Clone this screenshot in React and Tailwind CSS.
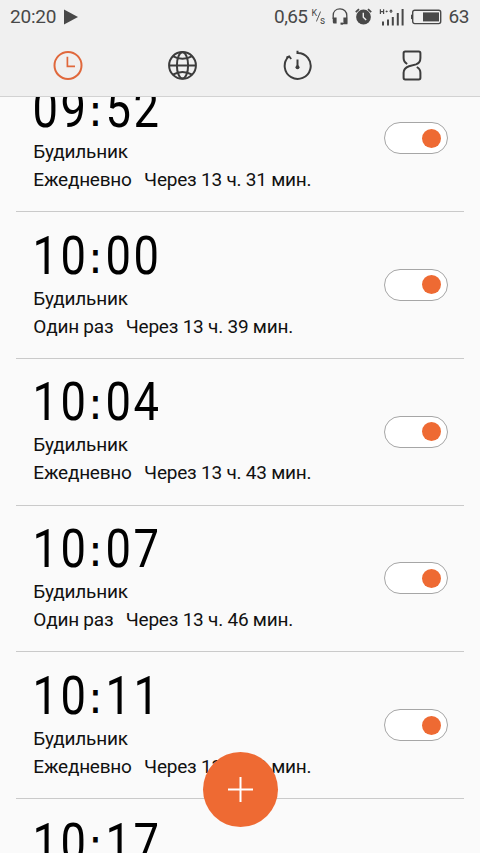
import React, { useState } from 'react';

const initialAlarms = [
    { id: 1, time: '09:52', repeat: 'Ежедневно', left: 'Через 13 ч. 31 мин.' },
    { id: 2, time: '10:00', repeat: 'Один раз', left: 'Через 13 ч. 39 мин.' },
    { id: 3, time: '10:04', repeat: 'Ежедневно', left: 'Через 13 ч. 43 мин.' },
    { id: 4, time: '10:07', repeat: 'Один раз', left: 'Через 13 ч. 46 мин.' },
    { id: 5, time: '10:11', repeat: 'Ежедневно', left: 'Через 13 ч. 50 мин.' },
    { id: 6, time: '10:17', repeat: 'Ежедневно', left: 'Через 13 ч. 56 мин.' },
];

const StatusBar = () => (
    <div className="h-[33px] flex items-center justify-between pl-[10px] pr-[11px] text-[19px] leading-[33px] text-[#484848]">
        <div className="flex items-center gap-[8px]">
            <span className="tracking-[-0.2px]">20:20</span>
            <svg width="14" height="16" viewBox="0 0 14 16" fill="#484848">
                <path d="M0 0.5L14 8L0 15.5Z" />
            </svg>
        </div>
        <div className="flex items-center">
            <span className="tracking-[-0.6px]">0,65</span>
            {/* Speed unit */}
            <span className="flex w-[14px] h-[16px] ml-[4px] text-[9px] leading-[8px]">
                <span>K</span>
                <svg className="-ml-[1px] mt-[2px] shrink-0" width="5" height="11" viewBox="0 0 5 11" stroke="#484848" strokeWidth="0.9">
                    <path d="M4.6 0.5L0.4 10.5" />
                </svg>
                <span className="self-end -ml-[1px] text-[10px]">s</span>
            </span>
            {/* Headset */}
            <svg className="ml-[7px]" width="16" height="17" viewBox="0 0 16 17" fill="none" stroke="#484848" strokeWidth="1.3">
                <path d="M1.2 11V7.5C1.2 3.6 4 0.9 8 0.9S14.8 3.6 14.8 7.5V15.6H9" />
                <path d="M0.8 9.5H4.6V15.5H2Q0.8 15.5 0.8 14ZM15.2 9.5H11.4V15.5H15.2Z" fill="#484848" stroke="none" />
                <path d="M8.5 15.6H11" strokeWidth="2" />
            </svg>
            {/* Alarm */}
            <svg className="ml-[7px]" width="17" height="17" viewBox="0 0 17 17" fill="none">
                <circle cx="8.5" cy="9" r="7.4" fill="#484848" />
                <path d="M0.8 4.2L4 1.2M16.2 4.2L13 1.2" stroke="#484848" strokeWidth="1.8" />
                <path d="M8.3 4.8V9.2L11.2 12" stroke="#efefef" strokeWidth="1.4" />
            </svg>
            {/* Mobile signal */}
            <svg className="ml-[7px]" width="25" height="18" viewBox="0 0 25 18" fill="#484848">
                <path d="M0.8 1.2H2V3H4V1.2H5.2V6H4V4.2H2V6H0.8Z" />
                <path d="M6.3 3.2L7.7 2.4L9 3.2L7.7 4.6ZM10 3.5L12 1.2L14 3.5H12.6V5H11.4V3.5Z" />
                <path d="M3 13.5H5V17.5H3ZM8 11.5H10V17.5H8ZM12.8 9H14.8V17.5H12.8ZM17.8 5H19.8V17.5H17.8ZM22.6 1H24.6V17.5H22.6Z" />
            </svg>
            {/* Battery */}
            <svg className="ml-[7px]" width="31" height="16" viewBox="0 0 31 16" fill="none">
                <rect x="1.7" y="1.2" width="28" height="13.4" rx="2" stroke="#484848" strokeWidth="1.4" />
                <rect x="0" y="5.7" width="1.6" height="4.4" fill="#484848" />
                <rect x="12" y="3.4" width="16" height="9" fill="#484848" />
            </svg>
            <span className="ml-[6px] tracking-[-0.4px]">63</span>
        </div>
    </div>
);

const Tabs = () => (
    <nav className="h-[63px] grid grid-cols-[136px_94px_136px_94px] pt-[17px] pr-[20px]">
        <button className="flex justify-center h-[32px]">
            <svg width="30" height="31" viewBox="0 0 30 31" fill="none" stroke="#e0683c" strokeWidth="2">
                <circle cx="15" cy="15.4" r="13.5" />
                <path d="M14.4 6.8V16.3H22" strokeWidth="1.7" />
            </svg>
        </button>
        <button className="flex justify-center h-[32px]">
            <svg width="30" height="31" viewBox="0 0 30 31" fill="none" stroke="#3c3c3c" strokeWidth="2">
                <circle cx="14.5" cy="15.4" r="13.4" />
                <ellipse cx="14.5" cy="15.4" rx="5.6" ry="13.2" />
                <path d="M1.4 15.4H28M4.8 6.2Q14.5 11.5 24.2 6.2M4.8 24.6Q14.5 19.3 24.2 24.6" />
            </svg>
        </button>
        <button className="flex justify-center h-[32px]">
            <svg width="30" height="31" viewBox="0 0 30 31" fill="none" stroke="#3c3c3c" strokeWidth="2">
                <path d="M14.5 0.8V4M14.5 2.9A13 13 0 1 1 5.6 6.6" />
                <path d="M3.4 7.6L6.2 6.4L8.2 9" strokeWidth="1.8" />
                <path d="M14.5 9.5V17" />
                <circle cx="14.5" cy="17.3" r="2" fill="#3c3c3c" stroke="none" />
            </svg>
        </button>
        <button className="flex justify-center h-[32px]">
            <svg className="-ml-[2px]" width="20" height="31" viewBox="0 0 20 31" fill="none" stroke="#3c3c3c" strokeWidth="2">
                <path d="M5.2 14Q1.6 11.8 1.6 8V3.2Q1.6 1.6 3.2 1.6H16.8Q18.4 1.6 18.4 3.2V8Q18.4 12.8 14 14.4L7 16.2Q1.6 18.2 1.6 22.8V27.8Q1.6 29.4 3.2 29.4H16.8Q18.4 29.4 18.4 27.8V22.8Q18.4 19 14.8 17" />
            </svg>
        </button>
    </nav>
);

// Narrow digits, one fixed cell per character
const AlarmTime = ({ value }) => (
    <div className="flex h-[54px] text-[54px] leading-[54px] text-black -ml-[2.5px]">
        {value.split('').map((char, i) =>
            char === ':' ? (
                <span key={i} className="w-[17px] flex justify-center font-['DejaVu_Sans',sans-serif] text-[44px] pt-[2px]">
                    :
                </span>
            ) : (
                <span key={i} className="w-[28px] flex justify-center">
                    <span className="scale-x-[0.84]">{char}</span>
                </span>
            )
        )}
    </div>
);

const Toggle = ({ on, onClick }) => (
    <button
        onClick={onClick}
        className={`w-[64px] h-[32px] rounded-full border border-[#a6a6a6] bg-white flex items-center px-[6px] ${on ? 'justify-end' : 'justify-start'}`}
    >
        <span className={`w-[19px] h-[19px] rounded-full ${on ? 'bg-[#ee6a33]' : 'bg-[#bdbdbd]'}`} />
    </button>
);

const App = () => {
    const [alarms, setAlarms] = useState(initialAlarms.map((a) => ({ ...a, on: true })));

    const toggle = (id) => {
        setAlarms(alarms.map((a) => (a.id === id ? { ...a, on: !a.on } : a)));
    };

    return (
        <div className="relative w-[480px] h-[853px] flex flex-col overflow-hidden bg-[#fafafa] font-['Roboto',sans-serif]">
            <header className="h-[97px] shrink-0 bg-[#f0f0f0] border-b border-[#d2d2d2]">
                <StatusBar />
                <Tabs />
            </header>

            <main className="flex-1 min-h-0 overflow-hidden">
                <ul className="-mt-[31.8px] px-[16px]">
                    {alarms.map((alarm) => (
                        <li
                            key={alarm.id}
                            className="h-[146.8px] flex justify-between border-b border-[#cacaca] pl-[17.3px] pr-[16px]"
                        >
                            <div className="pt-[16.6px] text-[19px] leading-[28px] tracking-[-0.22px] text-[#111]">
                                <AlarmTime value={alarm.time} />
                                <p className="mt-[2px]">Будильник</p>
                                <p className="flex gap-[12.4px]">
                                    <span>{alarm.repeat}</span>
                                    <span>{alarm.left}</span>
                                </p>
                            </div>
                            <div className="pt-[56.8px]">
                                <Toggle on={alarm.on} onClick={() => toggle(alarm.id)} />
                            </div>
                        </li>
                    ))}
                </ul>
            </main>

            {/* Add button */}
            <button className="absolute left-[202.5px] top-[752px] w-[75px] h-[75px] rounded-full bg-[#ee6a33] flex items-center justify-center">
                <svg width="25" height="25" viewBox="0 0 25 25" stroke="#fff" strokeWidth="2">
                    <path d="M12.5 0V25M0 12.5H25" />
                </svg>
            </button>
        </div>
    );
};

export default App;
